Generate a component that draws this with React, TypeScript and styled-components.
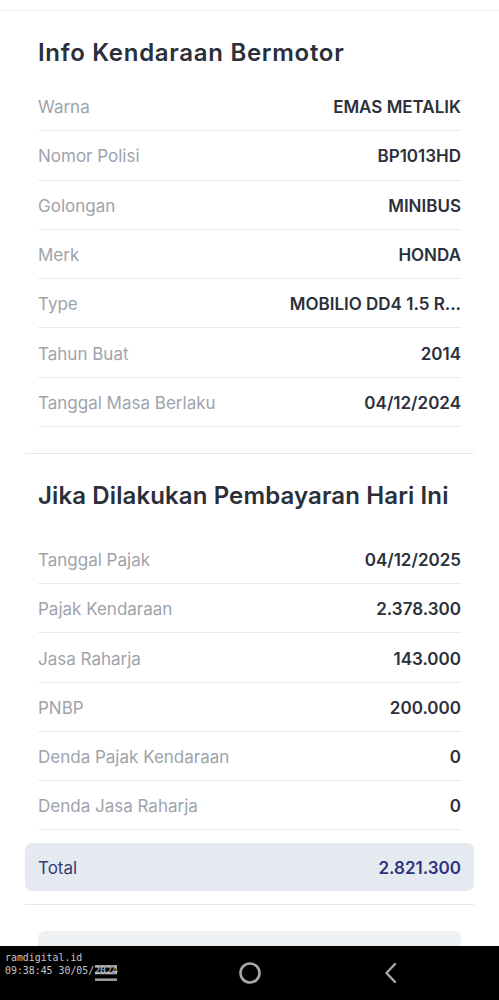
import React from "react";
import styled, { createGlobalStyle } from "styled-components";

const Global = createGlobalStyle`
  html, body { margin: 0; padding: 0; background: #ffffff; }
  body { font-family: "Inter", "Noto Sans", sans-serif; -webkit-font-smoothing: antialiased; }
  * { box-sizing: border-box; }
`;

const Page = styled.div`
  width: 499px;
  height: 1000px;
  overflow: hidden;
  position: relative;
  background: #ffffff;
  padding-top: 10px;
  display: flex;
  flex-direction: column;
`;

const TopRule = styled.div`
  height: 1px;
  background: #eceef1;
`;

const Section = styled.section<{ $top: number; $gap: number }>`
  padding: 0 38px;
  display: flex;
  flex-direction: column;
  & > h2 {
    margin-top: ${(p) => p.$top}px;
    margin-bottom: ${(p) => p.$gap}px;
  }
`;

const Title = styled.h2<{ $spacing: number }>`
  margin: 0;
  font-size: 24px;
  line-height: 30px;
  font-weight: 600;
  color: #2a2f3a;
  white-space: nowrap;
  letter-spacing: ${(p) => p.$spacing}px;
`;

const Row = styled.div<{ $h: number }>`
  height: ${(p) => p.$h}px;
  padding-top: 2px;
  border-bottom: 1px solid #e9ebee;
  display: flex;
  align-items: center;
  justify-content: space-between;
  font-size: 17px;
`;

const Label = styled.span`
  color: #9ea3ab;
  font-weight: 400;
`;

const Value = styled.span`
  color: #2b303a;
  font-weight: 600;
  white-space: nowrap;
`;

const Divider = styled.div<{ $mt: number }>`
  margin: ${(p) => p.$mt}px 25px 0;
  height: 1px;
  background: #e6e8eb;
`;

const TotalBox = styled.div`
  margin: 13px 25px 0;
  height: 48px;
  border-radius: 7px;
  background: #e5eaf0;
  padding: 2px 13px 0;
  display: flex;
  align-items: center;
  justify-content: space-between;
  font-size: 17px;
`;

const TotalLabel = styled.span`
  color: #343d72;
  font-weight: 400;
`;

const TotalValue = styled.span`
  color: #2e3380;
  font-weight: 600;
`;

const NextCard = styled.div`
  margin: 26px 38px 0;
  height: 60px;
  border-radius: 7px;
  background: #eef1f4;
`;

const NavBar = styled.div`
  position: absolute;
  left: 0;
  right: 0;
  bottom: 0;
  height: 54px;
  background: #000000;
  display: flex;
  align-items: center;
  justify-content: center;
  gap: 121px;
  padding-right: 5px;
`;

const NavIcon = styled.svg`
  display: block;
`;

const Watermark = styled.div`
  position: absolute;
  left: 5px;
  bottom: 23px;
  font-family: "DejaVu Sans Mono", "Liberation Mono", monospace;
  font-size: 9.9px;
  line-height: 13px;
  color: #c4c4c4;
  white-space: pre;
`;

const vehicle: [string, string][] = [
  ["Warna", "EMAS METALIK"],
  ["Nomor Polisi", "BP1013HD"],
  ["Golongan", "MINIBUS"],
  ["Merk", "HONDA"],
  ["Type", "MOBILIO DD4 1.5 R..."],
  ["Tahun Buat", "2014"],
  ["Tanggal Masa Berlaku", "04/12/2024"],
];

const payment: [string, string][] = [
  ["Tanggal Pajak", "04/12/2025"],
  ["Pajak Kendaraan", "2.378.300"],
  ["Jasa Raharja", "143.000"],
  ["PNBP", "200.000"],
  ["Denda Pajak Kendaraan", "0"],
  ["Denda Jasa Raharja", "0"],
];

export default function App() {
  return (
    <Page>
      <Global />
      <TopRule />
      <Section $top={27} $gap={14}>
        <Title $spacing={0.7}>Info Kendaraan Bermotor</Title>
        {vehicle.map(([l, v]) => (
          <Row key={l} $h={49.3}>
            <Label>{l}</Label>
            <Value>{v}</Value>
          </Row>
        ))}
      </Section>
      <Divider $mt={26} />
      <Section $top={27} $gap={24}>
        <Title $spacing={0.12}>Jika Dilakukan Pembayaran Hari Ini</Title>
        {payment.map(([l, v]) => (
          <Row key={l} $h={49.2}>
            <Label>{l}</Label>
            <Value>{v}</Value>
          </Row>
        ))}
      </Section>
      <TotalBox>
        <TotalLabel>Total</TotalLabel>
        <TotalValue>2.821.300</TotalValue>
      </TotalBox>
      <Divider $mt={13} />
      <NextCard />
      <NavBar>
        <NavIcon width="22" height="20" viewBox="0 0 22 20">
          <rect x="0" y="2" width="22" height="2.6" fill="#9a9a9a" />
          <rect x="0" y="8.7" width="22" height="2.6" fill="#9a9a9a" />
          <rect x="0" y="15.4" width="22" height="2.6" fill="#9a9a9a" />
        </NavIcon>
        <NavIcon width="24" height="24" viewBox="0 0 24 24">
          <circle cx="12" cy="12" r="9.5" fill="none" stroke="#a8a8a8" strokeWidth="2.6" />
        </NavIcon>
        <NavIcon width="16" height="22" viewBox="0 0 16 22">
          <path d="M12 2 L3.5 11 L12 20" fill="none" stroke="#a8a8a8" strokeWidth="2.4" strokeLinecap="round" strokeLinejoin="round" />
        </NavIcon>
      </NavBar>
      <Watermark>{"ramdigital.id\n09:38:45 30/05/2024"}</Watermark>
    </Page>
  );
}
